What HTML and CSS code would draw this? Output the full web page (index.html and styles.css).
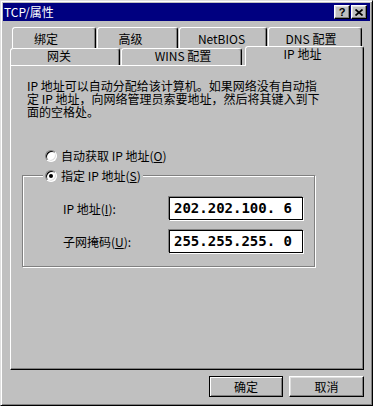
FILE: index.html
```html
<!DOCTYPE html>
<html lang="zh-CN">
<head>
  <meta charset="UTF-8">
  <title>TCP/IP 属性</title>
  <link rel="stylesheet" href="styles.css">
</head>
<body>

<div class="window">
  <div class="titlebar">
    <span class="title">TCP/属性</span>
    <div class="title-buttons">
      <button class="tb-btn">?</button>
      <button class="tb-btn">
        <svg width="8" height="7" viewBox="0 0 8 7"><path d="M0.5 0.5L7.5 6.5M7.5 0.5L0.5 6.5" stroke="#000" stroke-width="1.7"/></svg>
      </button>
    </div>
  </div>

  <div class="tabs">
    <div class="tab-row back">
      <div class="tab tab-bind">绑定</div>
      <div class="tab tab-adv">高级</div>
      <div class="tab tab-netbios">NetBIOS</div>
      <div class="tab tab-dns">DNS 配置</div>
    </div>
    <div class="tab-row front">
      <div class="tab tab-gw">网关</div>
      <div class="tab tab-wins">WINS 配置</div>
      <div class="tab tab-ip active">IP 地址</div>
    </div>
  </div>

  <div class="panel">
    <p class="desc">IP 地址可以自动分配给该计算机。如果网络没有自动指<br>定 IP 地址，向网络管理员索要地址，然后将其键入到下<br>面的空格处。</p>

    <div class="radio auto">
      <span class="radio-box"></span>
      <span>自动获取 IP 地址(<u>O</u>)</span>
    </div>

    <div class="group">
      <div class="radio legend">
        <span class="radio-box checked"></span>
        <span>指定 IP 地址(<u>S</u>)</span>
      </div>
      <div class="fields">
        <span class="field-label">IP 地址(<u>I</u>):</span>
        <div class="ip-box">202.202.100. 6</div>
        <span class="field-label">子网掩码(<u>U</u>):</span>
        <div class="ip-box">255.255.255. 0</div>
      </div>
    </div>
  </div>

  <div class="actions">
    <button class="btn btn-ok default">确定</button>
    <button class="btn btn-cancel">取消</button>
  </div>
</div>

</body>
</html>
```

FILE: styles.css
```css
* {
  box-sizing: border-box;
}
body {
  margin: 0;
  background: #c0c0c0;
  font-family: "Noto Sans CJK SC", sans-serif;
  font-size: 12px;
  color: #000;
}
.window {
  width: 373px;
  height: 406px;
  padding: 2px;
  border: 1px solid;
  border-color: #dfdfdf #000 #000 #dfdfdf;
  box-shadow: inset 1px 1px #fff, inset -1px -1px #808080;
  background: #c0c0c0;
}
.titlebar {
  height: 18px;
  background: #000080;
  color: #fff;
  display: flex;
  align-items: center;
  justify-content: space-between;
  padding: 0 3px 0 1px;
}
.title {
  line-height: 18px;
}
.title-buttons {
  display: flex;
  gap: 1px;
}
.tb-btn {
  width: 16px;
  height: 14px;
  padding: 0;
  border: 1px solid;
  border-color: #fff #000 #000 #fff;
  box-shadow: inset -1px -1px #808080, inset 1px 1px #dfdfdf;
  background: #c0c0c0;
  color: #000;
  font: bold 11px "Liberation Sans", sans-serif;
  display: flex;
  align-items: center;
  justify-content: center;
}

/* tabs */
.tabs {
  margin: 6px 0 0 7px;
}
.tab-row {
  display: flex;
  gap: 1px;
}
.tab-row.back {
  height: 21px;
  padding-left: 2px;
}
.tab-row.front {
  height: 17px;
  align-items: flex-end;
}
.tab {
  border: 1px solid;
  border-bottom: none;
  border-color: #fff #000 transparent #fff;
  border-radius: 3px 3px 0 0;
  box-shadow: inset -1px 0 #808080;
  background: #c0c0c0;
  text-align: center;
  line-height: 13px;
  white-space: nowrap;
}
.back .tab {
  height: 21px;
  padding-top: 4px;
}
.front .tab {
  height: 17px;
}
.tab-bind { width: 84px; padding-right: 16px; }
.tab-adv { width: 81px; padding-right: 14px; }
.tab-netbios { width: 88px; padding-right: 3px; }
.tab-dns { width: 94px; padding-right: 8px; }
.tab-gw { width: 110px; padding-right: 12px; }
.tab-wins { width: 121px; padding-left: 3px; }
.tab-ip { width: 119px; padding-right: 4px; }
.tab.active {
  height: 20px;
  margin-left: 2px;
  margin-bottom: -1px;
  position: relative;
  z-index: 1;
}

/* page */
.panel {
  margin-left: 7px;
  width: 354px;
  height: 305px;
  border: 1px solid;
  border-color: #fff #000 #000 #fff;
  box-shadow: inset -1px -1px #808080;
  overflow: hidden;
}
.desc {
  margin: 13px 0 0 16px;
  line-height: 13px;
  white-space: nowrap;
}
.radio {
  display: flex;
  align-items: center;
  gap: 4px;
  height: 13px;
  line-height: 13px;
}
.radio.auto {
  margin: 31px 0 0 34px;
}
.radio-box {
  width: 12px;
  height: 12px;
  border-radius: 50%;
  background: #fff;
  border: 1px solid;
  border-color: #808080 #fff #fff #808080;
  box-shadow: inset 1px 1px #000, inset -1px -1px #dfdfdf;
  display: flex;
  align-items: center;
  justify-content: center;
}
.radio-box.checked::after {
  content: "";
  width: 4px;
  height: 4px;
  border-radius: 50%;
  background: #000;
}
.group {
  margin: 13px 0 0 11px;
  width: 293px;
  border: 1px solid #808080;
  box-shadow: 1px 1px #fff, inset 1px 1px #fff;
  padding-bottom: 13px;
}
.radio.legend {
  width: fit-content;
  margin: -7px 0 0 20px;
  padding: 0 2px;
  background: #c0c0c0;
}
.fields {
  display: grid;
  grid-template-columns: 106px 134px;
  row-gap: 10px;
  align-items: center;
  margin: 15px 0 0 40px;
}
.field-label {
  white-space: nowrap;
}
.ip-box {
  height: 23px;
  border: 1px solid #000;
  box-shadow: -1px -1px #808080, 1px 1px #fff;
  background: #fff;
  padding-left: 4px;
  font: bold 14px "DejaVu Sans Mono", monospace;
  line-height: 21px;
  white-space: pre;
}

/* bottom buttons */
.actions {
  display: flex;
  justify-content: flex-end;
  gap: 6px;
  margin: 6px 6px 0 0;
}
.btn {
  height: 21px;
  padding: 0;
  background: #c0c0c0;
  color: #000;
  font: 12px "Noto Sans CJK SC", sans-serif;
  border: 1px solid;
  border-color: #fff #000 #000 #fff;
  box-shadow: inset -1px -1px #808080, inset 1px 1px #dfdfdf;
}
.btn-ok { width: 74px; }
.btn-cancel { width: 75px; }
.btn.default {
  border-color: #000;
  box-shadow: inset 1px 1px #fff, inset -1px -1px #808080;
}
```
